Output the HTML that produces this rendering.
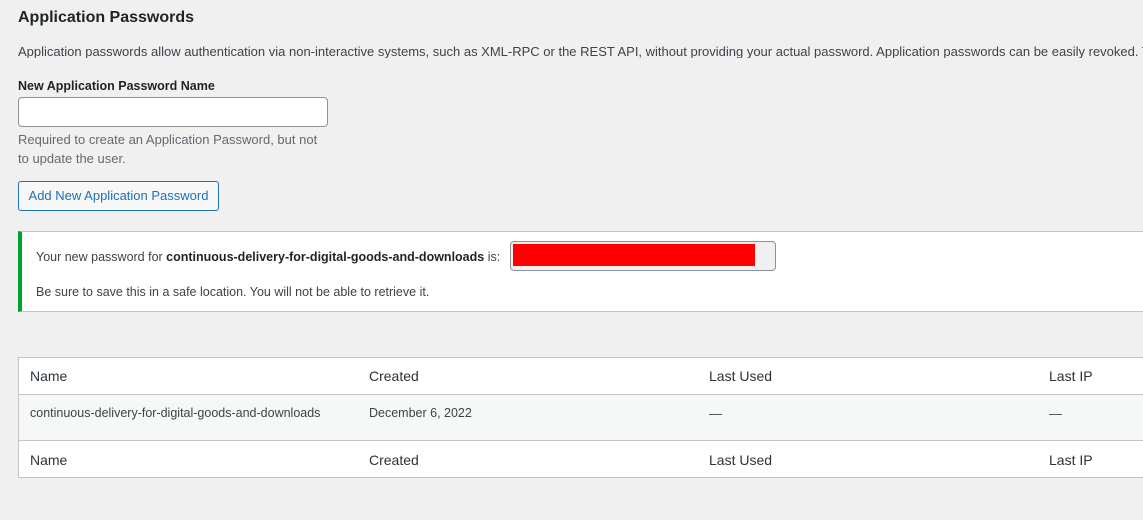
<!DOCTYPE html>
<html><head><meta charset="utf-8"><style>
html,body{margin:0;padding:0;width:1143px;height:520px;overflow:hidden;background:#f0f0f1;font-family:"Liberation Sans",Arial,sans-serif;color:#3c434a;font-size:13px;}
#w{position:relative;width:1143px;height:520px;overflow:hidden;}
.a{position:absolute;white-space:nowrap;line-height:1;}
h2{position:absolute;left:18px;top:8px;margin:0;font-size:16px;font-weight:600;color:#1d2327;line-height:20px;}
.box{position:absolute;box-sizing:border-box;}
</style></head><body><div id="w">
<h2>Application Passwords</h2>
<div class="a" style="left:18px;top:45px;width:1125px;overflow:hidden;">Application passwords allow authentication via non-interactive systems, such as XML-RPC or the REST API, without providing your actual password. Application passwords can be easily revoked. They</div>
<div class="a" style="left:18px;top:80px;font-weight:bold;color:#1d2327;font-size:12.5px;">New Application Password Name</div>
<div class="box" style="left:18px;top:97px;width:310px;height:30px;border:1px solid #8c8f94;border-radius:4px;background:#fff;"></div>
<div class="a" style="left:18px;top:133px;color:#646970;">Required to create an Application Password, but not</div>
<div class="a" style="left:18px;top:152px;color:#646970;">to update the user.</div>
<div class="box" style="left:18px;top:181px;width:201px;height:30px;border:1px solid #2271b1;border-radius:3px;background:#f6f7f7;color:#2271b1;text-align:center;line-height:28px;">Add New Application Password</div>

<div class="box" style="left:18px;top:231px;width:1126px;height:81px;background:#fff;border:1px solid #c3c4c7;border-left:4px solid #00a32a;"></div>
<div class="a" style="left:36px;top:251px;font-size:12.5px;">Your new password for <b style="font-weight:600;color:#1d2327">continuous-delivery-for-digital-goods-and-downloads</b> is:</div>
<div class="box" style="left:510px;top:241px;width:266px;height:30px;background:#f0f0f1;border:1px solid #8c8f94;border-radius:4px;"></div>
<div class="box" style="left:513px;top:244px;width:242px;height:22px;background:#ff0000;"></div>
<div class="a" style="left:36px;top:286px;font-size:12.5px;">Be sure to save this in a safe location. You will not be able to retrieve it.</div>

<div class="box" style="left:18px;top:357px;width:1126px;height:121px;background:#fff;border:1px solid #c3c4c7;"></div>
<div class="box" style="left:19px;top:394px;width:1125px;height:47px;background:#f6f7f7;border-top:1px solid #c3c4c7;border-bottom:1px solid #c3c4c7;"></div>
<div class="a" style="left:30px;top:369px;font-size:14px;color:#2c3338;">Name</div>
<div class="a" style="left:369px;top:369px;font-size:14px;color:#2c3338;">Created</div>
<div class="a" style="left:709px;top:369px;font-size:14px;color:#2c3338;">Last Used</div>
<div class="a" style="left:1049px;top:369px;font-size:14px;color:#2c3338;">Last IP</div>
<div class="a" style="left:30px;top:407px;font-size:12.5px;">continuous-delivery-for-digital-goods-and-downloads</div>
<div class="a" style="left:369px;top:407px;font-size:12.5px;">December 6, 2022</div>
<div class="a" style="left:709px;top:407px;">—</div>
<div class="a" style="left:1049px;top:407px;">—</div>
<div class="a" style="left:30px;top:453px;font-size:14px;color:#2c3338;">Name</div>
<div class="a" style="left:369px;top:453px;font-size:14px;color:#2c3338;">Created</div>
<div class="a" style="left:709px;top:453px;font-size:14px;color:#2c3338;">Last Used</div>
<div class="a" style="left:1049px;top:453px;font-size:14px;color:#2c3338;">Last IP</div>
</div></body></html>
